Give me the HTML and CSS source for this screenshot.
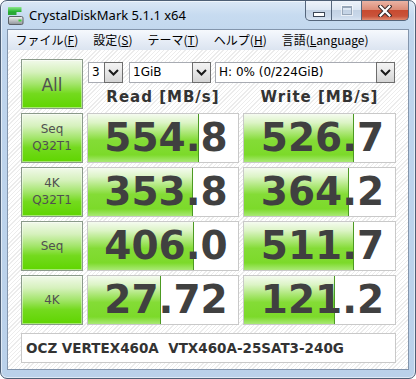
FILE: index.html
```html
<!DOCTYPE html>
<html lang="ja">
<head>
<meta charset="utf-8">
<title>CrystalDiskMark 5.1.1 x64</title>
<link rel="stylesheet" href="styles.css">
</head>
<body>
<div class="window">
  <div class="titlebar">
    <svg class="app-icon" width="16" height="18" viewBox="0 0 16 18">
      <defs>
        <linearGradient id="g1" x1="0" y1="0" x2="0" y2="1"><stop offset="0" stop-color="#8ee88e"/><stop offset="1" stop-color="#1fae2a"/></linearGradient>
        <linearGradient id="g2" x1="0" y1="0" x2="0" y2="1"><stop offset="0" stop-color="#f2f2f2"/><stop offset="1" stop-color="#8e9499"/></linearGradient>
      </defs>
      <rect x="0" y="0" width="13.5" height="5" rx="0.5" fill="url(#g1)"/>
      <rect x="0" y="5" width="8.5" height="3" fill="#2aa835"/>
      <rect x="0.5" y="9.5" width="14.5" height="8" rx="1.5" fill="url(#g2)" stroke="#5c6168"/>
      <rect x="10.5" y="12.5" width="3" height="2" fill="#3cd23c"/>
    </svg>
    <span class="title">CrystalDiskMark 5.1.1 x64</span>
    <div class="caption">
      <div class="cb cb-min"><span class="min-glyph"></span></div>
      <div class="cb cb-max"><span class="max-glyph"></span></div>
      <div class="cb cb-close">
        <svg width="14" height="12" viewBox="0 0 14 12">
          <path d="M2.5 1.5 L11.5 10.5 M11.5 1.5 L2.5 10.5" stroke="#3a2a2a" stroke-width="4.2" stroke-linecap="square" fill="none"/>
          <path d="M2.5 1.5 L11.5 10.5 M11.5 1.5 L2.5 10.5" stroke="#ffffff" stroke-width="2.2" stroke-linecap="square" fill="none"/>
        </svg>
      </div>
    </div>
  </div>
  <div class="frame">
    <div class="menubar">
      <span class="menu-item">ファイル(<u>F</u>)</span>
      <span class="menu-item">設定(<u>S</u>)</span>
      <span class="menu-item">テーマ(<u>T</u>)</span>
      <span class="menu-item">ヘルプ(<u>H</u>)</span>
      <span class="menu-item">言語(<u>L</u>anguage)</span>
    </div>
    <div class="client">
      <div class="top">
        <div class="btn btn-all">All</div>
        <div class="controls">
          <div class="selects">
            <div class="select sel-count"><span class="val">3</span><span class="drop"><svg width="11" height="7" viewBox="0 0 11 7"><path d="M1 1 L5.5 5.5 L10 1" stroke="#1a1a1a" stroke-width="2" fill="none"/></svg></span></div>
            <div class="select sel-size"><span class="val">1GiB</span><span class="drop"><svg width="11" height="7" viewBox="0 0 11 7"><path d="M1 1 L5.5 5.5 L10 1" stroke="#1a1a1a" stroke-width="2" fill="none"/></svg></span></div>
            <div class="select sel-drive"><span class="val">H: 0% (0/224GiB)</span><span class="drop"><svg width="11" height="7" viewBox="0 0 11 7"><path d="M1 1 L5.5 5.5 L10 1" stroke="#1a1a1a" stroke-width="2" fill="none"/></svg></span></div>
          </div>
          <div class="headers">
            <div class="head">Read [MB/s]</div>
            <div class="head">Write [MB/s]</div>
          </div>
        </div>
      </div>

      <div class="row">
        <div class="btn"><span>Seq</span><span>Q32T1</span></div>
        <div class="result"><div class="bar" style="width:111px"></div><span class="num">554.8</span></div>
        <div class="result"><div class="bar" style="width:110px"></div><span class="num">526.7</span></div>
      </div>
      <div class="row">
        <div class="btn"><span>4K</span><span>Q32T1</span></div>
        <div class="result"><div class="bar" style="width:105px"></div><span class="num">353.8</span></div>
        <div class="result"><div class="bar" style="width:105px"></div><span class="num">364.2</span></div>
      </div>
      <div class="row">
        <div class="btn"><span>Seq</span></div>
        <div class="result"><div class="bar" style="width:106px"></div><span class="num">406.0</span></div>
        <div class="result"><div class="bar" style="width:110px"></div><span class="num">511.7</span></div>
      </div>
      <div class="row">
        <div class="btn"><span>4K</span></div>
        <div class="result"><div class="bar" style="width:73px"></div><span class="num">27.72</span></div>
        <div class="result"><div class="bar" style="width:91px"></div><span class="num">121.2</span></div>
      </div>

      <div class="model">OCZ VERTEX460A&nbsp; VTX460A-25SAT3-240G</div>
    </div>
  </div>
</div>
</body>
</html>
```
FILE: styles.css
```css
html, body {
  margin: 0;
  padding: 0;
  background: #ffffff;
}

.window {
  width: 416px;
  height: 379px;
  box-sizing: border-box;
  border: 1px solid #4e5f75;
  border-radius: 7px;
  padding: 0 6px 8px 6px;
  background: linear-gradient(180deg, #dbe8f6 0px, #c7dbf0 14px, #bfd5ed 40px, #bad1ea 100%);
  box-shadow: inset 0 0 0 1px rgba(255,255,255,0.55);
  display: flex;
  flex-direction: column;
}

.titlebar {
  height: 28px;
  display: flex;
  align-items: flex-start;
  flex: none;
}

.app-icon {
  margin: 6px 0 0 1px;
  flex: none;
}

.title {
  font-family: "Noto Sans", sans-serif;
  font-size: 13px;
  line-height: 16px;
  margin: 6px 0 0 5px;
  color: #000;
}

.caption {
  margin-left: auto;
  display: flex;
  height: 19px;
  border: 1px solid #55667c;
  border-top: none;
  border-radius: 0 0 5px 5px;
  overflow: hidden;
  background: #55667c;
  gap: 1px;
}

.cb {
  display: flex;
  align-items: center;
  justify-content: center;
}

.cb-min, .cb-max {
  background: linear-gradient(180deg, #eef3fa 0%, #dde7f3 45%, #c3d2e4 50%, #c9d8ea 80%, #d8e4f2 100%);
}

.cb-min { width: 25px; }
.cb-max { width: 29px; }

.cb-close {
  width: 46px;
  background: linear-gradient(180deg, #eab3a4 0%, #dc8d78 45%, #c84a30 50%, #c9533a 80%, #e08a70 100%);
}

.min-glyph {
  width: 10px;
  height: 3px;
  margin-top: 7px;
  background: #fff;
  border: 1px solid #3b4656;
}

.max-glyph {
  width: 8px;
  height: 6px;
  border: 1px solid #97a6b8;
  border-top-width: 2px;
  box-shadow: 0 0 0 1px rgba(255,255,255,0.6);
}

.frame {
  flex: 1;
  border: 1px solid #8395ac;
  display: flex;
  flex-direction: column;
  background: #fff;
}

.menubar {
  height: 20px;
  flex: none;
  display: flex;
  align-items: center;
  padding-left: 0;
  background: linear-gradient(180deg, #f6f9fd 0%, #e8eef7 50%, #dbe4f0 100%);
  font-family: "Noto Sans CJK JP", sans-serif;
  font-size: 12px;
  color: #000;
}

.menu-item {
  padding: 0 7.5px;
  line-height: 20px;
}

.menu-item u {
  text-decoration-thickness: 1px;
  text-underline-offset: 1px;
}

.client {
  flex: 1;
  padding: 9px 12px 0 13px;
  display: flex;
  flex-direction: column;
  gap: 4px;
  background: repeating-linear-gradient(135deg, #ffffff 0px, #ffffff 2px, #ececec 2px, #ececec 3px);
  font-family: "DejaVu Sans", sans-serif;
}

.top {
  display: flex;
  gap: 4px;
  height: 50px;
}

.btn {
  width: 62px;
  box-sizing: border-box;
  border: 1px solid #8a9a8a;
  background: linear-gradient(180deg, #f1f9ea 0%, #d6f1bd 25%, #a3e56b 50%, #74da1e 70%, #5fd500 100%);
  box-shadow: inset 0 0 0 1px rgba(255,255,255,0.45);
  display: flex;
  flex-direction: column;
  align-items: center;
  justify-content: center;
  font-size: 12px;
  line-height: 17px;
  color: #505050;
}

.btn-all {
  font-size: 17px;
  flex: none;
  padding-top: 2px;
}

.controls {
  flex: 1;
  display: flex;
  flex-direction: column;
}

.selects {
  display: flex;
  margin: 3px 0 0 1px;
  height: 21px;
}

.select {
  display: flex;
  height: 21px;
  font-size: 12px;
  color: #000;
}

.sel-count { width: 35px; margin-right: 6px; }
.sel-size { width: 82px; margin-right: 4px; }
.sel-drive { width: 180px; }

.select .val {
  flex: 1;
  border: 1px solid #a8abb2;
  border-right: none;
  background: #fff;
  padding-left: 3px;
  line-height: 19px;
  white-space: nowrap;
  overflow: hidden;
}

.select .drop {
  width: 19px;
  box-sizing: border-box;
  border: 1px solid #6d6d6d;
  background: linear-gradient(180deg, #f4f4f4 0%, #e6e6e6 50%, #d4d4d4 100%);
  display: flex;
  align-items: center;
  justify-content: center;
}

.headers {
  flex: 1;
  display: grid;
  grid-template-columns: 152px 153px;
  column-gap: 4px;
  align-items: center;
}

.head {
  text-align: center;
  font-weight: bold;
  font-size: 15px;
  letter-spacing: 1px;
  color: #333333;
  padding-top: 2px;
}

.row {
  display: grid;
  grid-template-columns: 62px 152px 153px;
  column-gap: 4px;
  height: 50px;
}

.result {
  position: relative;
  box-sizing: border-box;
  border: 1px solid #c9c9c9;
  background: #fff;
  display: flex;
  align-items: center;
  justify-content: center;
  padding-left: 6px;
  overflow: hidden;
}

.bar {
  position: absolute;
  left: 0;
  top: 0;
  bottom: 0;
  box-sizing: border-box;
  border-right: 1px solid #4c9a22;
  background: linear-gradient(180deg, #f5fbf0 0%, #dcf4c6 18%, #a8e670 40%, #84dc36 55%, #7cda2a 85%, #a9e975 100%);
}

.num {
  position: relative;
  font-weight: bold;
  font-size: 39px;
  line-height: 44px;
  color: #404040;
}

.model {
  margin-top: 4px;
  height: 30px;
  box-sizing: border-box;
  border: 1px solid #c9c9c9;
  background: #fff;
  display: flex;
  align-items: center;
  padding-left: 4px;
  font-weight: bold;
  font-size: 13.5px;
  color: #333333;
  white-space: pre;
}
```
